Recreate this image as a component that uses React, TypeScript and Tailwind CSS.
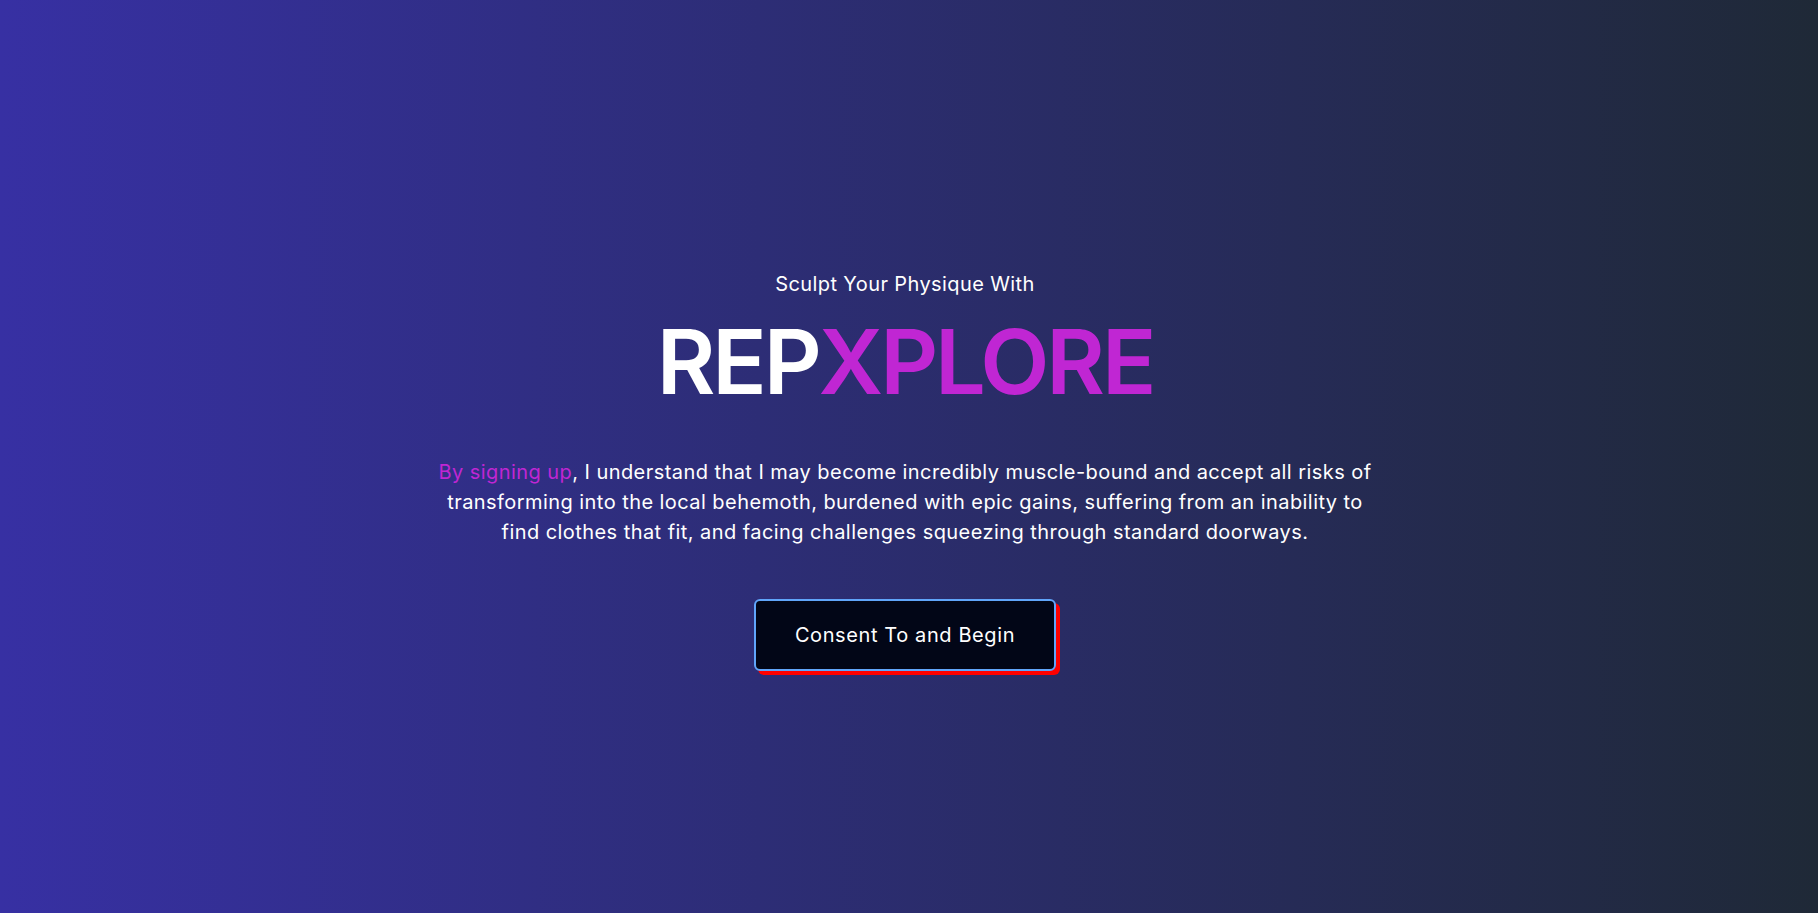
import React from 'react';

const App = () => {
  return (
    <main className="min-h-screen w-full bg-[linear-gradient(to_right,#3730a3,#1f2937)] font-['Inter',sans-serif] text-white">
      <div className="flex flex-col items-center pt-[270px] pl-4 pr-6 text-center">
        <p className="text-xl leading-7 tracking-[0.02em]">Sculpt Your Physique With</p>

        <h1 className="mt-[19px] text-[90px] leading-none font-semibold tracking-[-0.035em]">
          REP<span className="text-[#c026d3]">XPLORE</span>
        </h1>

        <p className="mt-[50px] max-w-[950px] text-xl leading-[30px] tracking-[0.022em]">
          <span className="text-[#c026d3]">By signing up</span>, I understand that I may become incredibly
          muscle-bound and accept all risks of transforming into the local behemoth, burdened with epic gains,
          suffering from an inability to find clothes that fit, and facing challenges squeezing through
          standard doorways.
        </p>

        <button className="mt-[52px] w-[302px] h-[72px] rounded-md border-2 border-[#60a5fa] bg-[#020617] text-xl tracking-[0.03em] text-white shadow-[4px_4px_0_#ff0000]">
          Consent To and Begin
        </button>
      </div>
    </main>
  );
};

export default App;
